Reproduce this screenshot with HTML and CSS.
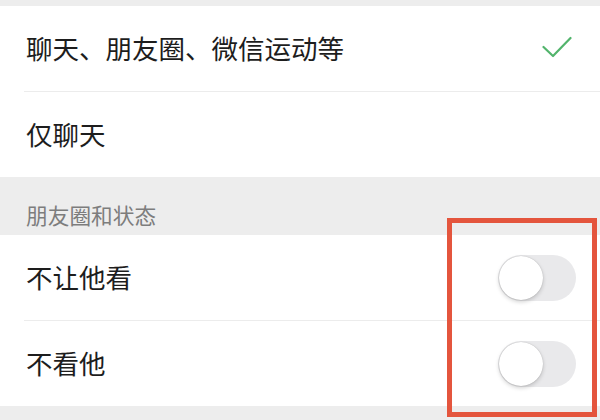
FILE: index.html
```html
<!DOCTYPE html>
<html lang="zh">
<head>
<meta charset="utf-8">
<link rel="stylesheet" href="styles.css">
</head>
<body>
<div class="page">
  <div class="gap-top"></div>
  <div class="group">
    <div class="row sep">
      <span class="label">聊天、朋友圈、微信运动等</span>
      <svg class="check" width="30" height="22" viewBox="0 0 30 22"><path d="M1.5 11 L11 20 L28.5 2" fill="none" stroke="#52b46c" stroke-width="2.2" stroke-linecap="round" stroke-linejoin="round"/></svg>
    </div>
    <div class="row">
      <span class="label">仅聊天</span>
    </div>
  </div>
  <div class="section-title">朋友圈和状态</div>
  <div class="group">
    <div class="row sep">
      <span class="label">不让他看</span>
      <span class="switch"><span class="knob"></span></span>
    </div>
    <div class="row">
      <span class="label">不看他</span>
      <span class="switch"><span class="knob"></span></span>
    </div>
  </div>
  <div class="highlight"></div>
</div>
</body>
</html>
```
FILE: styles.css
```css
html, body {
  margin: 0;
  padding: 0;
  background: #ededed;
  width: 600px;
  height: 420px;
  overflow: hidden;
  font-family: "Noto Sans CJK SC", "Noto Sans", sans-serif;
}
.page {
  position: relative;
  width: 600px;
  height: 420px;
}
.gap-top {
  height: 6px;
}
.group {
  background: #ffffff;
}
.row {
  height: 85px;
  display: flex;
  align-items: center;
  justify-content: space-between;
  padding: 0 24px 0 26px;
  position: relative;
}
.row.sep::after {
  content: "";
  position: absolute;
  left: 24px;
  right: 0;
  bottom: -1px;
  height: 1px;
  background: #ececec;
}
.row.sep {
  margin-bottom: 1px;
}
.label {
  font-size: 26.5px;
  color: #1d1d1d;
  line-height: 1;
}
.check {
  margin-right: 4px;
  margin-bottom: 3px;
}
.section-title {
  height: 58px;
  box-sizing: border-box;
  padding: 26px 0 0 26px;
  font-size: 21.7px;
  line-height: 24px;
  color: #7d7d7d;
}
.switch {
  width: 78px;
  height: 46px;
  border-radius: 23px;
  background: #e9e9eb;
  position: relative;
  display: block;
}
.knob {
  position: absolute;
  left: 1px;
  top: 1px;
  width: 44px;
  height: 44px;
  border-radius: 50%;
  background: #ffffff;
  box-shadow: 0 2px 4px rgba(0,0,0,0.18), 0 0 1px rgba(0,0,0,0.25);
}
.highlight {
  position: absolute;
  left: 447px;
  top: 218px;
  width: 150px;
  height: 199px;
  box-sizing: border-box;
  border: 5px solid #e4553d;
}
```
